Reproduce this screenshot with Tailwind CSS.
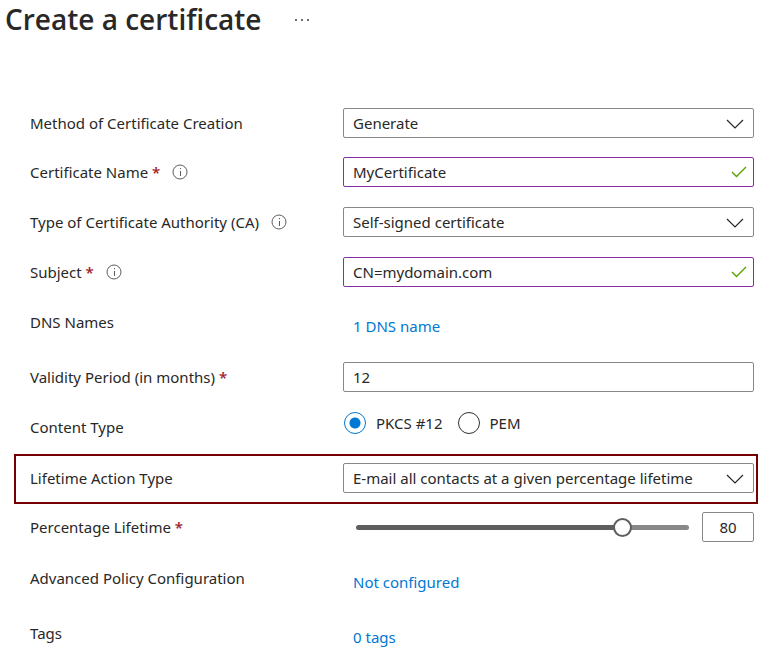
<!DOCTYPE html>
<html lang="en">
<head>
<meta charset="utf-8">
<meta name="viewport" content="width=device-width, initial-scale=1">
<title>Create a certificate</title>
<script src="https://cdn.jsdelivr.net/npm/@tailwindcss/browser@4"></script>
</head>
<body class="bg-white font-['Noto_Sans',sans-serif] text-[15px] leading-[30px] text-[#292827]">
<svg class="hidden" aria-hidden="true">
  <symbol id="info" viewBox="0 0 16 16"><circle cx="8" cy="8" r="7" fill="none" stroke="currentColor"/><path d="M8.5 7v5M8.5 4v1.2" fill="none" stroke="currentColor"/></symbol>
  <symbol id="chevron" viewBox="0 0 18 10"><path d="M1 1l8 8 8-8" fill="none" stroke="currentColor" stroke-width="1.2"/></symbol>
  <symbol id="check" viewBox="0 0 16 12"><path d="M1 6l4.5 4.5L15 1" fill="none" stroke="currentColor" stroke-width="1.4"/></symbol>
</svg>
<main>
  <header class="flex h-[108px] items-start pl-[5px]">
    <h1 class="font-['Open_Sans',sans-serif] text-[28px] leading-[38px] font-semibold">Create a certificate</h1>
    <button type="button" aria-label="More actions" class="ml-[30px] flex h-10 w-5 items-center justify-center">
      <svg class="h-1 w-4" viewBox="0 0 16 4" fill="currentColor"><circle cx="2" cy="2" r=".9"/><circle cx="8" cy="2" r=".9"/><circle cx="14" cy="2" r=".9"/></svg>
    </button>
  </header>
  <form>
    <div class="flex pr-1 pl-[30px]">
      <label for="method" class="w-[313px] shrink-0">Method of Certificate Creation</label>
      <div class="relative flex-1">
        <select id="method" class="block h-[30px] w-full appearance-none rounded-[2px] border border-[#8a8886] bg-white pr-9 pl-[9px] leading-[28px]"><option>Generate</option></select>
        <svg class="pointer-events-none absolute top-[11px] right-[10px] h-[10px] w-[18px]"><use href="#chevron"/></svg>
      </div>
    </div>
    <div class="mt-[19px] flex pr-1 pl-[30px]">
      <div class="flex w-[313px] shrink-0 items-center">
        <label for="name">Certificate Name <span class="font-semibold text-[#a4262c]">*</span></label>
        <button type="button" aria-label="About certificate name" class="ml-3 text-[#605e5c]"><svg class="size-4"><use href="#info"/></svg></button>
      </div>
      <div class="relative flex-1">
        <input id="name" type="text" value="MyCertificate" class="block h-[30px] w-full rounded-[2px] border border-[#8a2da5] pr-9 pl-[9px]">
        <svg class="pointer-events-none absolute top-[9px] right-[7px] h-3 w-4 text-[#57a300]"><use href="#check"/></svg>
      </div>
    </div>
    <div class="mt-5 flex pr-1 pl-[30px]">
      <div class="flex w-[313px] shrink-0 items-center">
        <label for="ca">Type of Certificate Authority (CA)</label>
        <button type="button" aria-label="About certificate authority" class="ml-3 text-[#605e5c]"><svg class="size-4"><use href="#info"/></svg></button>
      </div>
      <div class="relative flex-1">
        <select id="ca" class="block h-[30px] w-full appearance-none rounded-[2px] border border-[#8a8886] bg-white pr-9 pl-[9px] leading-[28px]"><option>Self-signed certificate</option></select>
        <svg class="pointer-events-none absolute top-[11px] right-[10px] h-[10px] w-[18px]"><use href="#chevron"/></svg>
      </div>
    </div>
    <div class="mt-5 flex pr-1 pl-[30px]">
      <div class="flex w-[313px] shrink-0 items-center">
        <label for="subject">Subject <span class="font-semibold text-[#a4262c]">*</span></label>
        <button type="button" aria-label="About subject" class="ml-3 text-[#605e5c]"><svg class="size-4"><use href="#info"/></svg></button>
      </div>
      <div class="relative flex-1">
        <input id="subject" type="text" value="CN=mydomain.com" class="block h-[30px] w-full rounded-[2px] border border-[#8a2da5] pr-9 pl-[9px]">
        <svg class="pointer-events-none absolute top-[9px] right-[7px] h-3 w-4 text-[#57a300]"><use href="#check"/></svg>
      </div>
    </div>
    <div class="mt-5 flex pr-1 pl-[30px]">
      <span class="w-[313px] shrink-0">DNS Names</span>
      <a href="#dns" class="mt-1 ml-[10px] text-[#0078d4]">1 DNS name</a>
    </div>
    <div class="mt-[21px] flex pr-1 pl-[30px]">
      <label for="validity" class="w-[313px] shrink-0">Validity Period (in months) <span class="font-semibold text-[#a4262c]">*</span></label>
      <div class="flex-1">
        <input id="validity" type="text" value="12" class="block h-[30px] w-full rounded-[2px] border border-[#8a8886] px-[9px]">
      </div>
    </div>
    <div role="radiogroup" aria-labelledby="content-type" class="mt-4 flex pr-1 pl-[30px]">
      <span id="content-type" class="mt-1 w-[313px] shrink-0">Content Type</span>
      <label class="ml-px flex h-[30px] items-center gap-[10px]"><input type="radio" name="type" checked class="size-[22px] appearance-none rounded-full border border-[#323130] checked:border-[#0078d4] checked:bg-[radial-gradient(circle,#0078d4_5px,transparent_6px)]">PKCS #12</label>
      <label class="ml-[15px] flex h-[30px] items-center gap-[10px]"><input type="radio" name="type" class="size-[22px] appearance-none rounded-full border border-[#323130] checked:border-[#0078d4] checked:bg-[radial-gradient(circle,#0078d4_5px,transparent_6px)]">PEM</label>
    </div>
    <div class="mt-3 ml-[14px] flex border-2 border-[#750000] pt-[7px] pr-[2px] pb-[9px] pl-[14px]">
      <label for="action" class="w-[313px] shrink-0">Lifetime Action Type</label>
      <div class="relative flex-1">
        <select id="action" class="block h-[30px] w-full appearance-none rounded-[2px] border border-[#8a8886] bg-white pr-9 pl-[9px] leading-[28px]"><option>E-mail all contacts at a given percentage lifetime</option></select>
        <svg class="pointer-events-none absolute top-[11px] right-[10px] h-[10px] w-[18px]"><use href="#chevron"/></svg>
      </div>
    </div>
    <div class="mt-2 flex pr-1 pl-[30px]">
      <label for="lifetime" class="w-[313px] shrink-0">Percentage Lifetime <span class="font-semibold text-[#a4262c]">*</span></label>
      <div class="mx-[13px] grid flex-1 items-center">
        <div class="col-start-1 row-start-1 h-[5px] rounded-full bg-[linear-gradient(to_right,#605e5c_80%,#8a8886_80%)]"></div>
        <input id="lifetime" type="range" min="0" max="100" value="80" class="col-start-1 row-start-1 -mx-[9px] h-[20px] appearance-none bg-transparent [&::-webkit-slider-thumb]:size-[19px] [&::-webkit-slider-thumb]:appearance-none [&::-webkit-slider-thumb]:rounded-full [&::-webkit-slider-thumb]:border-2 [&::-webkit-slider-thumb]:border-[#605e5c] [&::-webkit-slider-thumb]:bg-white">
      </div>
      <input type="text" value="80" aria-label="Percentage lifetime value" class="h-[30px] w-[52px] rounded-[2px] border border-[#8a8886] text-center">
    </div>
    <div class="mt-[21px] flex pr-1 pl-[30px]">
      <span class="w-[313px] shrink-0">Advanced Policy Configuration</span>
      <a href="#policy" class="mt-1 ml-[10px] text-[#0078d4]">Not configured</a>
    </div>
    <div class="mt-[21px] flex pr-1 pl-[30px]">
      <span class="w-[313px] shrink-0">Tags</span>
      <a href="#tags" class="mt-1 ml-[10px] text-[#0078d4]">0 tags</a>
    </div>
  </form>
</main>
</body>
</html>
